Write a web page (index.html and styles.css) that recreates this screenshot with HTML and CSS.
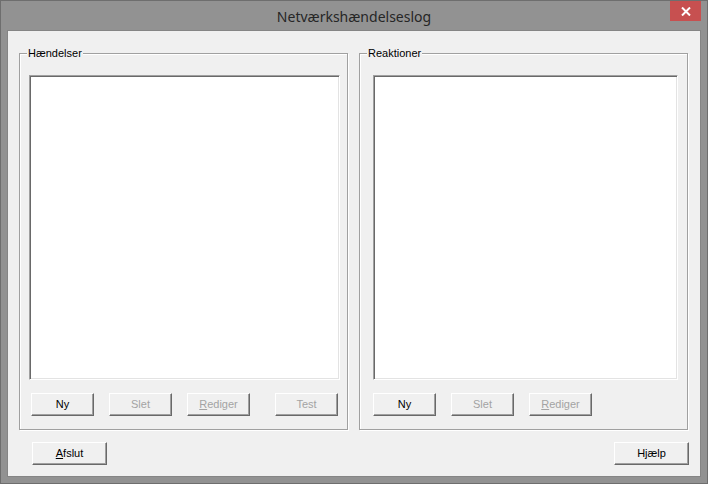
FILE: index.html
```html
<!DOCTYPE html>
<html lang="da">
<head>
<meta charset="utf-8">
<title>Netværkshændelseslog</title>
<link rel="stylesheet" href="styles.css">
</head>
<body>
<div class="window">
  <div class="titlebar">
    <div class="spacer"></div>
    <div class="title">Netværkshændelseslog</div>
    <button class="close" aria-label="Luk">
      <svg width="10" height="9" viewBox="0 0 10 9"><path d="M1 0.5 L9 8.5 M9 0.5 L1 8.5" stroke="#fff" stroke-width="2" fill="none"/></svg>
    </button>
  </div>
  <div class="client">
    <div class="groups">
      <div class="group group-left">
        <div class="group-label">Hændelser</div>
        <div class="listbox list-left"></div>
        <div class="btnrow row-left">
          <button class="btn">Ny</button>
          <button class="btn disabled">Slet</button>
          <button class="btn disabled"><u>R</u>ediger</button>
          <button class="btn disabled push">Test</button>
        </div>
      </div>
      <div class="group group-right">
        <div class="group-label">Reaktioner</div>
        <div class="listbox list-right"></div>
        <div class="btnrow row-right">
          <button class="btn">Ny</button>
          <button class="btn disabled">Slet</button>
          <button class="btn disabled"><u>R</u>ediger</button>
        </div>
      </div>
    </div>
    <div class="footer">
      <button class="btn wide"><u>A</u>fslut</button>
      <button class="btn wide">Hjælp</button>
    </div>
  </div>
</div>
</body>
</html>
```
FILE: styles.css
```css
* { box-sizing: border-box; }
html, body { margin: 0; padding: 0; }
body { width: 708px; height: 484px; overflow: hidden; background: #929292; }

.window {
  width: 708px;
  height: 484px;
  background: #929292;
  border: 1px solid #6e6e6e;
  display: flex;
  flex-direction: column;
}

.titlebar {
  height: 30px;
  display: grid;
  grid-template-columns: 1fr auto 1fr;
  align-items: start;
}
.title {
  font-family: "Noto Sans", "Open Sans", sans-serif;
  font-size: 14px;
  line-height: 30px;
  color: #262626;
  padding-top: 1px;
}
.close {
  justify-self: end;
  margin-right: 6px;
  width: 31px;
  height: 20px;
  border: 0;
  padding: 0;
  background: #c75050;
  display: flex;
  align-items: center;
  justify-content: center;
}

.client {
  margin: 0 7px 7px 7px;
  width: 692px;
  height: 445px;
  background: #f0f0f0;
  box-shadow: 0 0 0 1px #858585;
  font-family: "Liberation Sans", Arial, sans-serif;
  font-size: 11px;
  color: #000;
  display: flex;
  flex-direction: column;
}

.groups {
  display: flex;
  gap: 11px;
  padding: 22px 12px 0 11px;
}

.group {
  width: 329px;
  height: 377px;
  border: 1px solid #a0a0a0;
  box-shadow: inset 1px 1px #fff, 1px 1px #fff;
  display: flex;
  flex-direction: column;
}
.group-label {
  margin: -7px 0 0 7px;
  padding: 0 1px;
  width: fit-content;
  line-height: 13px;
  background: #f0f0f0;
  color: #000;
}

.listbox {
  margin-top: 15px;
  height: 305px;
  background: #fff;
  border: 1px solid;
  border-color: #a0a0a0 #fff #fff #a0a0a0;
  box-shadow: inset 1px 1px #696969, inset -1px -1px #e3e3e3;
}
.list-left { margin-left: 9px; width: 311px; }
.list-right { margin-left: 13px; width: 305px; }

.btnrow {
  display: flex;
  gap: 15px;
  margin-top: 13px;
}
.row-left { margin-left: 11px; width: 307px; }
.row-right { margin-left: 13px; }
.push { margin-left: 10px; }

.btn {
  width: 63px;
  height: 23px;
  padding: 0;
  background: #f0f0f0;
  border: 1px solid;
  border-color: #fff #696969 #696969 #fff;
  box-shadow: inset -1px -1px #a0a0a0;
  font-family: "Liberation Sans", Arial, sans-serif;
  font-size: 11px;
  color: #000;
  text-align: center;
  line-height: 19px;
}
.btn.disabled { color: #a3a3a3; }
.btn u { text-decoration-thickness: 1px; text-underline-offset: 1px; }

.footer {
  display: flex;
  justify-content: space-between;
  margin-top: 12px;
  padding: 0 11px 0 24px;
}
.wide { width: 75px; }
```
